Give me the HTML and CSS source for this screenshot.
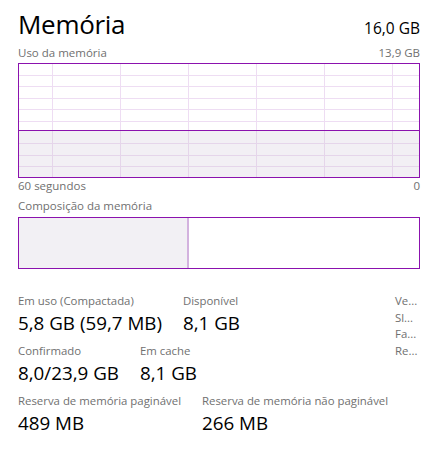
FILE: index.html
```html
<!DOCTYPE html>
<html lang="pt-BR">
<head>
<meta charset="utf-8">
<link rel="stylesheet" href="styles.css">
</head>
<body>
<div class="page">
  <div class="header">
    <div class="title">Memória</div>
    <div class="total">16,0 GB</div>
  </div>
  <div class="caption-row top-caption">
    <span>Uso da memória</span>
    <span>13,9 GB</span>
  </div>
  <svg class="graph" width="402" height="115" viewBox="0 0 402 115">
    <rect x="0" y="68" width="402" height="47" fill="#f2eff4"/>
    <g stroke="#eeddf3" stroke-width="1">
      <line x1="0" y1="12.5" x2="402" y2="12.5"/>
      <line x1="0" y1="23.5" x2="402" y2="23.5"/>
      <line x1="0" y1="35.5" x2="402" y2="35.5"/>
      <line x1="0" y1="46.5" x2="402" y2="46.5"/>
      <line x1="0" y1="58.5" x2="402" y2="58.5"/>
      <line x1="34.5" y1="0" x2="34.5" y2="68"/>
      <line x1="102.5" y1="0" x2="102.5" y2="68"/>
      <line x1="170.5" y1="0" x2="170.5" y2="68"/>
      <line x1="238.5" y1="0" x2="238.5" y2="68"/>
      <line x1="306.5" y1="0" x2="306.5" y2="68"/>
      <line x1="374.5" y1="0" x2="374.5" y2="68"/>
    </g>
    <g stroke="#e5d5ea" stroke-width="1">
      <line x1="0" y1="80.5" x2="402" y2="80.5"/>
      <line x1="0" y1="92.5" x2="402" y2="92.5"/>
      <line x1="0" y1="103.5" x2="402" y2="103.5"/>
      <line x1="34.5" y1="68" x2="34.5" y2="115"/>
      <line x1="102.5" y1="68" x2="102.5" y2="115"/>
      <line x1="170.5" y1="68" x2="170.5" y2="115"/>
      <line x1="238.5" y1="68" x2="238.5" y2="115"/>
      <line x1="306.5" y1="68" x2="306.5" y2="115"/>
      <line x1="374.5" y1="68" x2="374.5" y2="115"/>
    </g>
    <line x1="0" y1="67.5" x2="402" y2="67.5" stroke="#8b12ae" stroke-width="1"/>
    <rect x="0.5" y="0.5" width="401" height="114" fill="none" stroke="#8b12ae" stroke-width="1"/>
  </svg>
  <div class="caption-row">
    <span>60 segundos</span>
    <span>0</span>
  </div>
  <div class="caption-row comp-caption">
    <span>Composição da memória</span>
  </div>
  <div class="composition">
    <div class="comp-used" style="width: 168px"></div>
    <div class="comp-free"></div>
  </div>
  <div class="details">
    <div class="stats">
      <div class="stat-row">
        <div class="stat">
          <div class="label">Em uso (Compactada)</div>
          <div class="value">5,8 GB (59,7 MB)</div>
        </div>
        <div class="stat">
          <div class="label">Disponível</div>
          <div class="value">8,1 GB</div>
        </div>
      </div>
      <div class="stat-row">
        <div class="stat">
          <div class="label">Confirmado</div>
          <div class="value">8,0/23,9 GB</div>
        </div>
        <div class="stat">
          <div class="label">Em cache</div>
          <div class="value">8,1 GB</div>
        </div>
      </div>
      <div class="stat-row">
        <div class="stat">
          <div class="label">Reserva de memória paginável</div>
          <div class="value">489 MB</div>
        </div>
        <div class="stat">
          <div class="label">Reserva de memória não paginável</div>
          <div class="value">266 MB</div>
        </div>
      </div>
    </div>
    <div class="props">
      <div class="prop">Ve...</div>
      <div class="prop">Sl...</div>
      <div class="prop">Fa...</div>
      <div class="prop">Re...</div>
    </div>
  </div>
</div>
</body>
</html>
```
FILE: styles.css
```css
html, body {
  margin: 0;
  padding: 0;
  background: #ffffff;
}

body {
  font-family: "Open Sans", "Noto Sans", sans-serif;
  color: #000000;
}

.page {
  width: 402px;
  padding: 6px 17px 0 18px;
}

.header {
  display: flex;
  justify-content: space-between;
  align-items: baseline;
  height: 36px;
}

.title {
  font-size: 26px;
  line-height: 36px;
  font-weight: 400;
  letter-spacing: -0.3px;
}

.total {
  font-size: 15.5px;
  line-height: 20px;
}

.caption-row {
  display: flex;
  justify-content: space-between;
  font-size: 11.5px;
  line-height: 16px;
  color: #707070;
}

.top-caption {
  margin-top: 3px;
  margin-bottom: 2px;
}

.graph {
  display: block;
}

.comp-caption {
  margin-top: 4px;
  margin-bottom: 3px;
}

.composition {
  display: flex;
  height: 50px;
  border: 1px solid #8b12ae;
}

.comp-used {
  background: #f2f0f4;
  border-right: 2px solid #d3b2de;
}

.comp-free {
  flex: 1;
  background: #ffffff;
}

.details {
  display: flex;
  justify-content: space-between;
  margin-top: 24px;
}

.stats {
  display: flex;
  flex-direction: column;
  gap: 8px;
}

.stat-row {
  display: flex;
  gap: 21px;
}

.label {
  font-size: 11.4px;
  line-height: 16px;
  color: #707070;
  white-space: nowrap;
}

.value {
  font-size: 18.8px;
  line-height: 24px;
  margin-top: 2px;
  white-space: nowrap;
}

.props {
  width: 25px;
}

.prop {
  font-size: 11.4px;
  line-height: 16.7px;
  color: #707070;
  white-space: nowrap;
}
```
